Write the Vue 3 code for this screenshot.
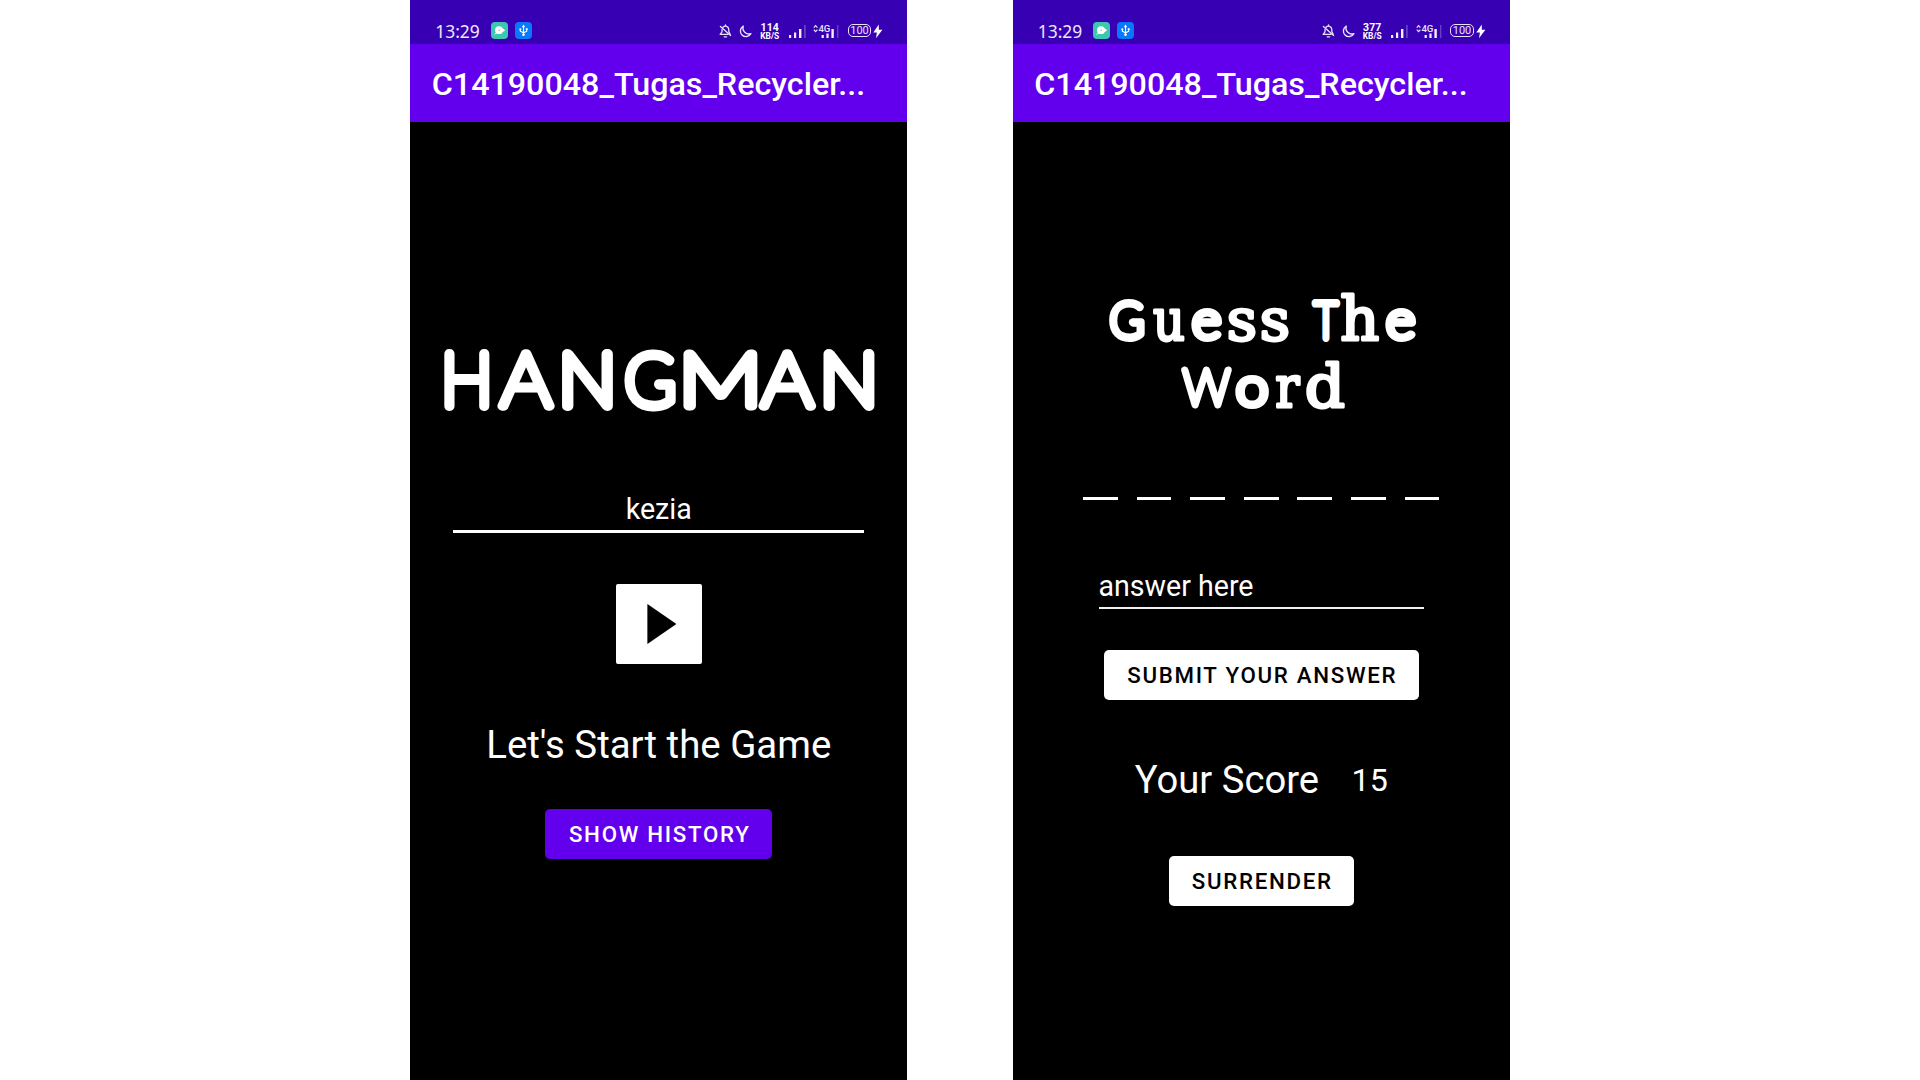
<script setup>
const phones = [
  { id: 'start', speed: '114' },
  { id: 'guess', speed: '377' },
]

const ctx = document.createElement('canvas').getContext('2d')
const round = { family: 'Lato', weight: 100, stroke: 8 }
const slab = { family: 'DejaVu Serif', weight: 400, stroke: 3 }

// Fits every letter of a lettering line between its left and right edge
// and stands it on the line's bottom edge. The outline scales with the glyph.
// Entry: [character, left, right, font size, style, stroke override]
function fit(bottom, letters) {
  return letters.map(([ch, left, right, size, style = round, stroke = style.stroke]) => {
    ctx.font = `${style.weight} ${size * 10}px "${style.family}"`
    const m = ctx.measureText(ch)
    const ink = (m.actualBoundingBoxRight + m.actualBoundingBoxLeft) / 10
    const scale = (right - left) / (ink + stroke)
    return {
      ch,
      x: left + (stroke / 2 + m.actualBoundingBoxLeft / 10) * scale,
      y: bottom - stroke / 2,
      length: (m.width / 10) * scale,
      size,
      stroke,
      family: style.family,
      weight: style.weight,
    }
  })
}

const hangman = fit(90.7, [
  ['H', 34, 80, 74.4, round, 10],
  ['A', 87, 145.5, 74.4, round, 9.4],
  ['N', 151.5, 203.5, 74.4, round, 10],
  ['G', 214, 266, 72.8, round, 10],
  ['M', 273, 348, 74.4, round, 9],
  ['A', 348, 407, 74.4, round, 9.4],
  ['N', 413, 465, 74.4, round, 10],
])
const guess = [
  fit(71.5, [
    ['G', 96, 132, 49.5],
    ['u', 139.5, 171.5, 58.5, slab],
    ['e', 177.5, 209.5, 52],
    ['s', 215, 243, 57.5, slab],
    ['s', 248, 276, 57.5, slab],
    ['T', 298, 327.5, 50],
    ['h', 327.5, 366.5, 59, slab],
    ['e', 371.5, 403.5, 52],
  ]),
  fit(138.8, [
    ['W', 167.5, 219.5, 50, round, 7],
    ['o', 221.5, 256.5, 52],
    ['r', 262.5, 288, 58.5, slab],
    ['d', 293, 332.5, 59, slab],
  ]),
]
</script>

<template>
  <main class="stage">
    <section v-for="phone in phones" :key="phone.id" class="phone">
      <div class="status">
        <span class="time">13:29</span>
        <svg class="app-icon" width="17" height="17" viewBox="0 0 17 17">
          <rect width="17" height="17" rx="4" fill="#3cc8b0" />
          <circle cx="8" cy="8.2" r="3.9" fill="#fff" />
          <path d="M3.6 12.4 6 10.4M11 6.6l2.6 1.7-2.6 1.6z" fill="#fff" stroke="#fff" stroke-width="1" />
          <circle cx="8.2" cy="8.2" r="1" fill="#a5dccb" />
        </svg>
        <svg class="usb-icon" width="17" height="17" viewBox="0 0 17 17">
          <rect width="17" height="17" rx="4" fill="#0879fb" />
          <path d="M8.5 4v8.5M5.3 7v2.2l3.2 1.6 3.2-1.6V7" fill="none" stroke="#fff" stroke-width="1.1" />
          <path d="M8.5 2.6 6.8 5.2h3.4z" fill="#fff" />
          <circle cx="8.5" cy="12.8" r="1.3" fill="#fff" />
          <circle cx="5.3" cy="7.2" r="1" fill="#fff" />
          <rect x="10.8" y="6.2" width="1.8" height="1.8" fill="#fff" />
        </svg>
        <svg class="bell" width="13" height="14" viewBox="0 0 13 14">
          <g fill="none" stroke="#e9e2fa" stroke-width="1.3" stroke-linecap="round" stroke-linejoin="round">
            <path d="M4 3.2C6 1 9.6 2.2 9.8 5.4v2.2l1.4 2.6M8.8 10.4H1.2L3 7.8V5.6" />
            <path d="M1.4 2.4 11.6 11.4M5.2 12.8h2.4M6.5.8v.8" />
          </g>
        </svg>
        <svg class="moon" width="13" height="13" viewBox="0 0 13 13">
          <path d="M4.3 1.1A5.6 5.6 0 1 0 11.9 8.7 6 6 0 0 1 4.3 1.1z" fill="none" stroke="#e9e2fa" stroke-width="1.4" stroke-linejoin="round" />
        </svg>
        <span class="speed"><b>{{ phone.speed }}</b><small>KB/S</small></span>
        <svg class="bars" width="19" height="15" viewBox="0 0 19 15">
          <path d="M1 11h2.2v3H1zM6 8.5h2.2V14H6zM11 5h2.4v9H11z" fill="#f3effc" />
          <path d="M16 1h1.8v13H16z" fill="#6440c6" />
        </svg>
        <svg class="lte" width="27" height="15" viewBox="0 0 27 15">
          <path d="M.8 3.6 2.6 1.6 4.4 3.6M.8 5.6 2.6 7.6 4.4 5.6" fill="none" stroke="#e9e2fa" stroke-width="1.2" />
          <text x="5.4" y="7.8" class="lte-label">4G</text>
          <path d="M8.6 11h2.2v3H8.6zM13.4 9.5h2.2V14h-2.2zM18.4 5h2.4v9h-2.4z" fill="#f3effc" />
          <path d="M24 1h1.4v13H24z" fill="#6440c6" />
        </svg>
        <span class="battery">100</span>
        <svg class="bolt" width="10" height="15" viewBox="0 0 10 15">
          <path d="M5.8.5.3 8.5h3.6L3 14.3l6.4-8.6H5.8z" fill="#fff" />
        </svg>
      </div>
      <header class="app-bar">C14190048_Tugas_Recycler...</header>

      <div v-if="phone.id === 'start'" class="screen">
        <svg class="logo" width="497" height="120" viewBox="0 0 497 120">
          <text class="lettering"><tspan
            v-for="(l, i) in hangman" :key="i" :x="l.x" :y="l.y" :textLength="l.length" lengthAdjust="spacingAndGlyphs"
            :font-size="l.size" :font-family="l.family" :font-weight="l.weight" :stroke-width="l.stroke">{{ l.ch }}</tspan></text>
        </svg>
        <div class="name-field">kezia</div>
        <button class="play">
          <svg width="30" height="40" viewBox="0 0 30 40"><path d="M.4 0 29.4 20 .4 40z" /></svg>
        </button>
        <p class="tagline">Let's Start the Game</p>
        <button class="btn history">SHOW HISTORY</button>
      </div>

      <div v-else class="screen">
        <svg class="prompt" width="497" height="160" viewBox="0 0 497 160">
          <text v-for="(line, n) in guess" :key="n" class="lettering"><tspan
            v-for="(l, i) in line" :key="i" :x="l.x" :y="l.y" :textLength="l.length" lengthAdjust="spacingAndGlyphs"
            :font-size="l.size" :font-family="l.family" :font-weight="l.weight" :stroke-width="l.stroke">{{ l.ch }}</tspan></text>
        </svg>
        <div class="blanks"><i v-for="n in 7" :key="n"></i></div>
        <div class="answer-field">answer here</div>
        <button class="btn submit">SUBMIT YOUR ANSWER</button>
        <div class="score"><span>Your Score</span><span class="points">15</span></div>
        <button class="btn surrender">SURRENDER</button>
      </div>
    </section>
  </main>
</template>

<style>
body {
  margin: 0;
  background: #fff;
}
</style>

<style scoped>
.stage {
  display: flex;
  justify-content: center;
  gap: 105.5px;
  height: 1080px;
  overflow: hidden;
  font-family: Roboto, sans-serif;
}
.phone {
  width: 497px;
  height: 1080px;
  background: #000;
  color: #fff;
}
.status {
  box-sizing: border-box;
  display: flex;
  align-items: flex-start;
  height: 44px;
  padding: 22px 0 0 25px;
  background: #3700b3;
}
.status > * {
  flex: none;
}
.time {
  width: 43px;
  margin: 0 12.5px 0 0;
  font: 400 17.4px/18px 'Noto Sans', sans-serif;
  white-space: nowrap;
  color: #eee8fb;
}
.usb-icon {
  margin-left: 7px;
}
.bell {
  margin: 1.5px 0 0 187.5px;
}
.moon {
  margin: 2.5px 0 0 7px;
}
.speed {
  display: flex;
  flex-direction: column;
  width: 19px;
  margin: 0.5px 0 0 8px;
  text-align: center;
  white-space: nowrap;
}
.speed b {
  font: 700 10.5px/9px Roboto, sans-serif;
  letter-spacing: 0.2px;
}
.speed small {
  font: 700 8.4px/8px Roboto, sans-serif;
}
.bars {
  margin: 1.5px 0 0 8.5px;
}
.lte {
  margin: 1.5px 0 0 6.5px;
}
.lte-label {
  font: 500 9.6px Roboto, sans-serif;
  fill: #e9e2fa;
}
.battery {
  box-sizing: border-box;
  width: 23.5px;
  height: 13px;
  margin: 2px 0 0 7.5px;
  border: 1.2px solid #e9e2fa;
  border-radius: 5px;
  font: 400 11px/11.5px Roboto, sans-serif;
  text-align: center;
  color: #e9e2fa;
}
.bolt {
  margin: 1.5px 0 0 2px;
}
.app-bar {
  box-sizing: border-box;
  height: 78px;
  padding: 3px 0 0 21.5px;
  background: #6200ee;
  font-weight: 500;
  font-size: 32.25px;
  line-height: 74px;
  white-space: nowrap;
}
.screen {
  display: flex;
  flex-direction: column;
  align-items: center;
  width: 497px;
}
.lettering {
  fill: #fff;
  stroke: #fff;
  stroke-linejoin: round;
  stroke-linecap: round;
}
.logo {
  margin-top: 198px;
}
.name-field {
  box-sizing: border-box;
  width: 411px;
  height: 41px;
  margin-top: 52px;
  border-bottom: 3px solid #fff;
  font-size: 28.6px;
  line-height: 34px;
  text-align: center;
}
button {
  display: flex;
  align-items: center;
  justify-content: center;
  padding: 0;
  border: 0;
  background: #fff;
  color: #000;
}
.play {
  width: 86px;
  height: 80px;
  margin-top: 51px;
  border-radius: 2px;
}
.play svg {
  margin-left: 7px;
}
.tagline {
  margin: 59px 0 0;
  font-size: 38.4px;
  line-height: 44px;
}
.btn {
  box-sizing: border-box;
  height: 50px;
  padding: 0 0 0 2px;
  border-radius: 5px;
  font: 500 22.3px/50px Roboto, sans-serif;
  letter-spacing: 1.7px;
  white-space: nowrap;
}
.history {
  width: 227px;
  margin-top: 42.4px;
  background: #6200ee;
  color: #fff;
}
.prompt {
  margin-top: 148px;
}
.blanks {
  display: flex;
  justify-content: space-between;
  width: 356px;
  margin-top: 67px;
}
.blanks i {
  width: 34.7px;
  height: 3px;
  background: #fff;
}
.answer-field {
  box-sizing: border-box;
  width: 325.5px;
  height: 39px;
  margin-top: 70px;
  border-bottom: 2px solid #f0f0f0;
  font-size: 28.6px;
  line-height: 33px;
}
.submit {
  width: 315px;
  margin-top: 40.5px;
}
.score {
  display: flex;
  width: 253px;
  margin-top: 58px;
  font-size: 38.2px;
  line-height: 44px;
  white-space: nowrap;
}
.points {
  margin-left: auto;
  font-size: 32.2px;
}
.surrender {
  width: 185px;
  margin-top: 54.5px;
}
</style>
